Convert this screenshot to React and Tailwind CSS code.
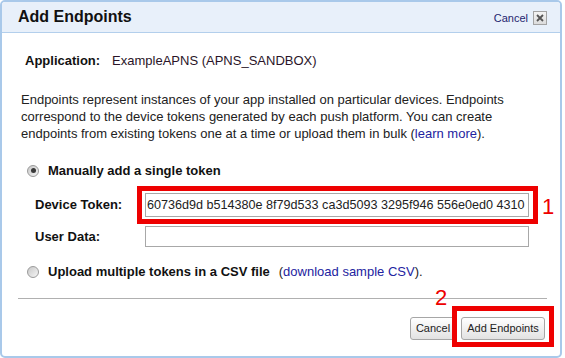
export default function App() {
  const Radio = ({ checked }) => (
    <span className="w-[12px] h-[12px] rounded-full border border-[#9a9a9a] bg-gradient-to-br from-[#c8c8c8] to-[#f6f6f6] flex items-center justify-center shrink-0">
      {checked && <span className="w-[5px] h-[5px] rounded-full bg-[#3a3a3a]" />}
    </span>
  );
  return (
    <div className="w-[565px] h-[358px] bg-white font-['Liberation_Sans',Arial,sans-serif] text-[13px] text-[#222]">
      <div className="w-[562px] h-[358px] border-2 border-[#a9c9ea] rounded-[5px] overflow-hidden flex flex-col">
        <div className="h-[31px] shrink-0 bg-[#e8f0fa] border-b border-[#b3cfec] flex items-center justify-between pl-[16px] pr-[13px]">
          <span className="text-[16px] font-bold text-[#111] leading-none">Add Endpoints</span>
          <div className="flex items-center gap-[5px] pt-[2px]">
            <span className="text-[11px] text-[#1f1f6f] leading-none">Cancel</span>
            <span className="w-[14px] h-[14px] border border-[#a3a3a3] bg-gradient-to-b from-[#f4f4f4] to-[#dcdcdc] flex items-center justify-center">
              <svg width="8" height="8" viewBox="0 0 8 8">
                <path d="M1 1 L7 7 M7 1 L1 7" stroke="#555" strokeWidth="1.8" />
              </svg>
            </span>
          </div>
        </div>

        <div className="flex flex-col">
          <div className="mt-[20px] ml-[23px] leading-[15px] flex">
            <span className="font-bold text-[#111]">Application:</span>
            <span className="ml-[12px] text-[#2a1428]">ExampleAPNS (APNS_SANDBOX)</span>
          </div>

          <p className="mt-[23px] ml-[19px] leading-[17px]">
            Endpoints represent instances of your app installed on particular devices. Endpoints
            <br />
            correspond to the device tokens generated by each push platform. You can create
            <br />
            endpoints from existing tokens one at a time or upload them in bulk (
            <span className="text-[#2323a0]">learn more</span>).
          </p>

          <div className="mt-[20px] ml-[25px] h-[17px] flex items-center">
            <Radio checked />
            <span className="ml-[9px] font-bold text-[#111]">Manually add a single token</span>
          </div>

          <div className="mt-[7px] ml-[33px] flex items-center">
            <span className="w-[102px] font-bold text-[#111]">Device Token:</span>
            <div className="w-[401px] h-[38px] border-[5px] border-[#ee0000] pl-[3px] pr-[4px] py-[2px]">
              <input
                readOnly
                value="60736d9d b514380e 8f79d533 ca3d5093 3295f946 556e0ed0 4310"
                className="w-[384px] h-[24px] border border-[#a8a8a8] px-[1px] text-[12.6px] text-[#222] outline-none bg-white font-['Liberation_Sans',Arial,sans-serif]"
              />
            </div>
            <span className="self-start mt-[10px] ml-[4px] text-[22px] leading-none text-[#ee0000]">1</span>
          </div>

          <div className="mt-[2px] ml-[33px] flex items-center">
            <span className="w-[110px] font-bold text-[#111]">User Data:</span>
            <input readOnly value="" className="w-[384px] h-[21px] border border-[#a8a8a8] outline-none bg-white" />
          </div>

          <div className="mt-[16px] ml-[25px] h-[17px] flex items-center">
            <Radio />
            <span className="ml-[9px] font-bold text-[#111]">Upload multiple tokens in a CSV file</span>
            <span className="ml-[9px]">
              (<span className="text-[#2323a0]">download sample CSV</span>).
            </span>
          </div>

          <div className="mt-[18px] ml-[16px] w-[529px] h-px bg-[#b0b0b0]" />

          <div className="mt-[18px] pr-[15px] flex justify-end gap-[5px]">
            <button className="w-[46px] h-[23px] border border-[#a6a6a6] rounded-[3px] bg-gradient-to-b from-white to-[#e2e2e2] text-[11px] text-[#222] flex items-center justify-center">
              Cancel
            </button>
            <div className="relative">
              <button className="w-[84px] h-[23px] border border-[#a6a6a6] rounded-[3px] bg-gradient-to-b from-white to-[#e2e2e2] text-[11px] text-[#222] flex items-center justify-center">
                Add Endpoints
              </button>
              <div className="absolute left-[-9px] right-[-9px] top-[-11px] bottom-[-7px] border-[5px] border-[#ee0000] pointer-events-none" />
              <span className="absolute left-[-26px] top-[-30px] text-[22px] leading-none text-[#ee0000]">2</span>
            </div>
          </div>
        </div>
      </div>
    </div>
  );
}
